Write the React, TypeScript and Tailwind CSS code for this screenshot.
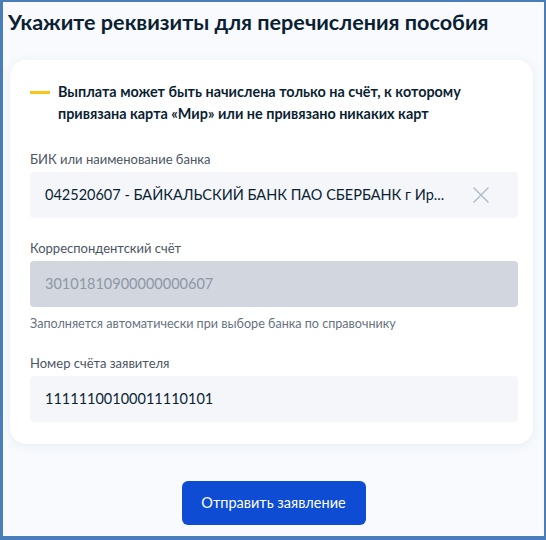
// Реквизиты для перечисления пособия — форма с тремя полями и кнопкой

const FONT = "font-['Lato','Noto_Sans',sans-serif]"

function ClearIcon() {
  return (
    <svg width="16" height="16" viewBox="0 0 16 16" className="shrink-0 text-[#b3bdcb]">
      <path d="M1 1L15 15M15 1L1 15" stroke="currentColor" strokeWidth="1.5" strokeLinecap="round" />
    </svg>
  )
}

function Field({
  label,
  value,
  disabled,
  clearable,
  hint,
}: {
  label: string
  value: string
  disabled?: boolean
  clearable?: boolean
  hint?: string
}) {
  return (
    <div className="flex flex-col">
      <div className="text-[13px] leading-[18px] text-[#4b5563] mb-1">{label}</div>
      <div
        className={
          disabled
            ? 'h-[46px] rounded-[4px] bg-[#d1d6df] flex items-center pl-[15px] pr-[29px]'
            : 'h-[46px] rounded-[4px] bg-[#f4f6fa] flex items-center pl-[15px] pr-[29px]'
        }
      >
        <span
          className={
            disabled
              ? 'flex-1 truncate text-[14.5px] text-[#8e98a6]'
              : 'flex-1 truncate text-[14.5px] text-[#0b1f33]'
          }
        >
          {value}
        </span>
        {clearable && <ClearIcon />}
      </div>
      {hint && <div className="mt-[9px] text-[12.6px] leading-[16px] text-[#66727f]">{hint}</div>}
    </div>
  )
}

export default function App() {
  return (
    <div
      className={`${FONT} w-[546px] h-[540px] box-border border-l-[3px] border-t-2 border-r-2 border-b-[4px] border-[#4a7ebb] bg-[#f8fafd] flex flex-col`}
    >
      <h1 className="pl-[5px] pt-[7px] text-[21.6px] leading-[26px] font-bold text-[#0b1f33]">
        Укажите реквизиты для перечисления пособия
      </h1>

      <div className="mt-[25px] ml-[7px] mr-[11px] bg-white rounded-[16px] shadow-[0_2px_10px_rgba(160,175,200,0.18)] pt-[21px] pb-[22px] pl-5 pr-[15px] flex flex-col">
        <div className="flex">
          <div className="w-[20px] h-[3px] bg-[#fcc419] mt-[10px] mr-[8px] shrink-0" />
          <p className="text-[14.4px] leading-[22px] font-bold text-[#0b1f33]">
            Выплата может быть начислена только на счёт, к которому
            <br />
            привязана карта «Мир» или не привязано никаких карт
          </p>
        </div>

        <div className="mt-[25px]">
          <Field
            label="БИК или наименование банка"
            value="042520607 - БАЙКАЛЬСКИЙ БАНК ПАО СБЕРБАНК г Ир..."
            clearable
          />
        </div>
        <div className="mt-[21px]">
          <Field
            label="Корреспондентский счёт"
            value="30101810900000000607"
            disabled
            hint="Заполняется автоматически при выборе банка по справочнику"
          />
        </div>
        <div className="mt-[22px]">
          <Field label="Номер счёта заявителя" value="11111100100011110101" />
        </div>
      </div>

      <div className="flex justify-center mt-[37px]">
        <button
          type="button"
          className="w-[184px] h-[44px] rounded-[6px] bg-[#0d4cd3] text-white text-[14.5px]"
        >
          Отправить заявление
        </button>
      </div>
    </div>
  )
}
